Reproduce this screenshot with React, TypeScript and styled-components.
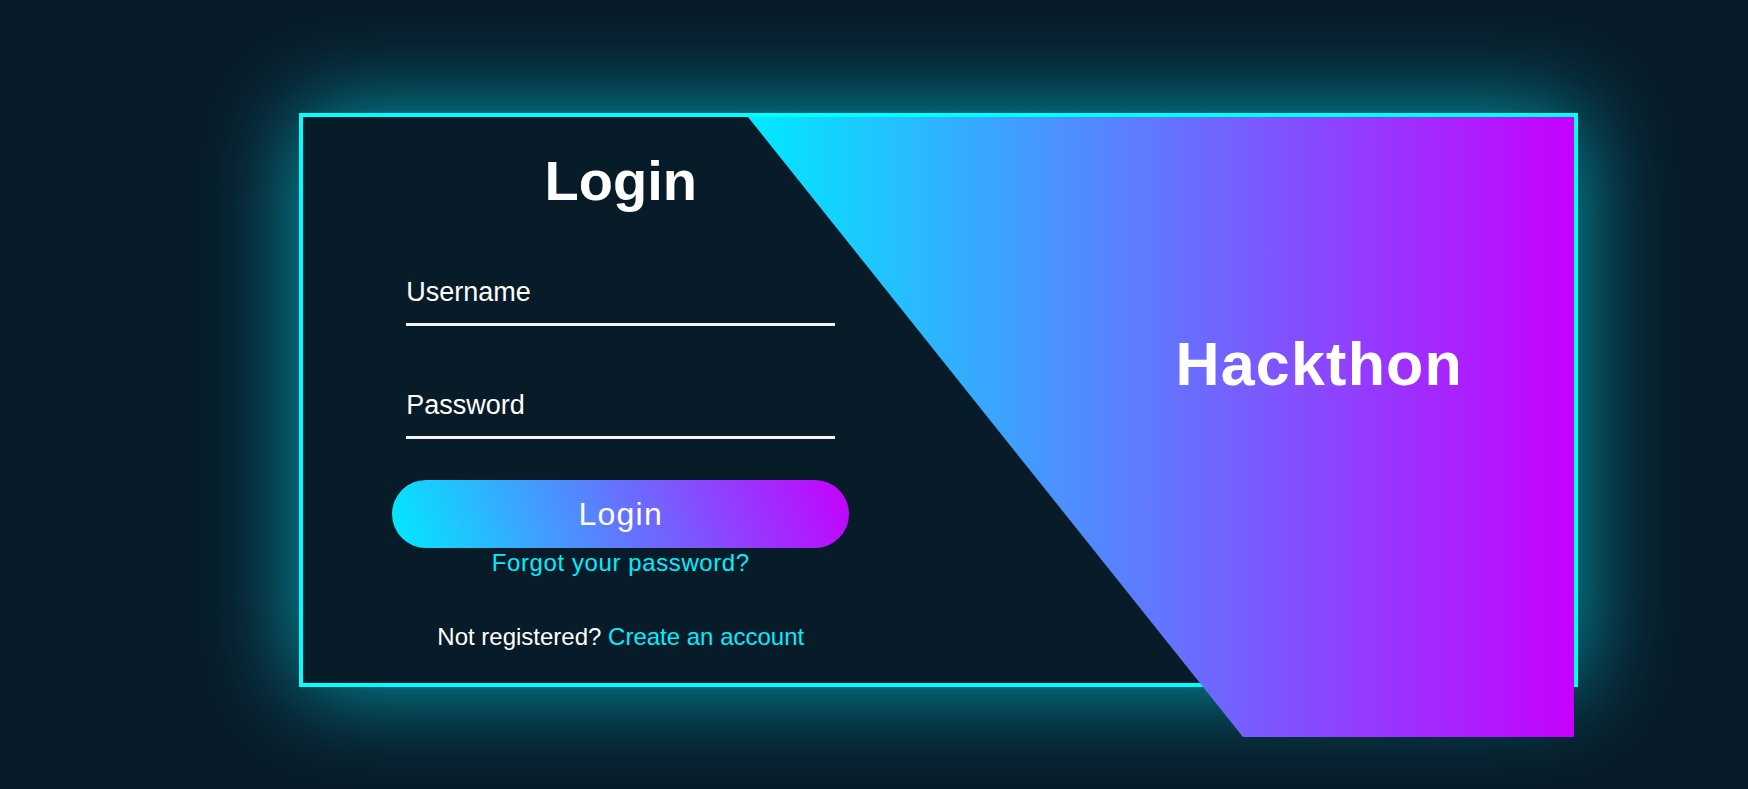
import styled, { createGlobalStyle } from "styled-components";

/* ===============================
   Global
================================ */

const GlobalStyle = createGlobalStyle`
  * {
    box-sizing: border-box;
  }

  body {
    margin: 0;
    background: #081b29;
    font-family: "Liberation Sans", Arial, sans-serif;
    color: #fff;
  }
`;

/* ===============================
   Page + Card
================================ */

const Page = styled.main`
  height: 100vh;
  padding: 113px 0 0 299px;
  overflow: hidden;
`;

const Card = styled.section`
  position: relative;
  width: 1279px;
  height: 574px;

  border: 4px solid #0ff;
  background: #081b29;

  box-shadow: 0 0 90px rgba(0, 238, 255, 0.65);

  display: grid;
  grid-template-columns: 1fr 1fr;
`;

/* decorative slanted gradient, spills past the card bottom */
const Panel = styled.div`
  position: absolute;
  top: 0;
  right: 0;

  width: 826px;
  height: 620px;

  background: linear-gradient(90deg, #00eaff, #c600ff);
  clip-path: polygon(0 0, 100% 0, 100% 100%, 495px 100%);
`;

/* ===============================
   Form side
================================ */

const FormSide = styled.form`
  position: relative;
  z-index: 1;

  display: flex;
  flex-direction: column;
  align-items: center;

  padding-top: 36px;
`;

const Title = styled.h2`
  margin: 0 0 68px;

  font-size: 56px;
  font-weight: 700;
  line-height: 1;
`;

const Input = styled.input<{ $gap?: number }>`
  width: 429px;
  height: 30px;
  margin: 0 0 ${(p) => p.$gap ?? 0}px;
  padding: 0 0 16px;
  box-sizing: content-box;

  background: transparent;
  border: none;
  border-bottom: 3px solid #f2f2f2;
  outline: none;

  font-family: inherit;
  font-size: 27px;
  color: #fff;

  &::placeholder {
    color: #fff;
    opacity: 1;
  }
`;

const Button = styled.button`
  width: 457px;
  height: 68px;
  margin-top: 41px;

  border: none;
  border-radius: 34px;
  background: linear-gradient(70deg, #00eaff, #c600ff);

  font-family: inherit;
  font-size: 32px;
  letter-spacing: 1.2px;
  color: #fff;

  cursor: pointer;
`;

const Link = styled.a`
  color: #0ef;
  text-decoration: none;
`;

const Forgot = styled(Link)`
  margin-top: 1px;

  font-size: 24px;
  line-height: 1.15;
  letter-spacing: 0.6px;
`;

const Signup = styled.p`
  margin: 46px 0 0;

  font-size: 24px;
  line-height: 1.15;
`;

/* ===============================
   Brand side
================================ */

const BrandSide = styled.div`
  position: relative;
  z-index: 1;

  display: flex;
  align-items: center;
  justify-content: center;

  padding: 0 0 72px 126px;
`;

const Brand = styled.h1`
  margin: 0;

  font-size: 61px;
  font-weight: 700;
  line-height: 1;
  letter-spacing: 1.2px;
`;

/* ===============================
   Component
================================ */

export default function App() {
  return (
    <>
      <GlobalStyle />

      <Page>
        <Card>

          <Panel />

          {/* Login form */}
          <FormSide onSubmit={(e) => e.preventDefault()}>

            <Title>Login</Title>

            <Input type="text" placeholder="Username" $gap={64} />
            <Input type="password" placeholder="Password" />

            <Button type="submit">Login</Button>

            <Forgot href="#">Forgot your password?</Forgot>

            <Signup>
              Not registered? <Link href="#">Create an account</Link>
            </Signup>

          </FormSide>

          {/* Brand */}
          <BrandSide>
            <Brand>Hackthon</Brand>
          </BrandSide>

        </Card>
      </Page>
    </>
  );
}
